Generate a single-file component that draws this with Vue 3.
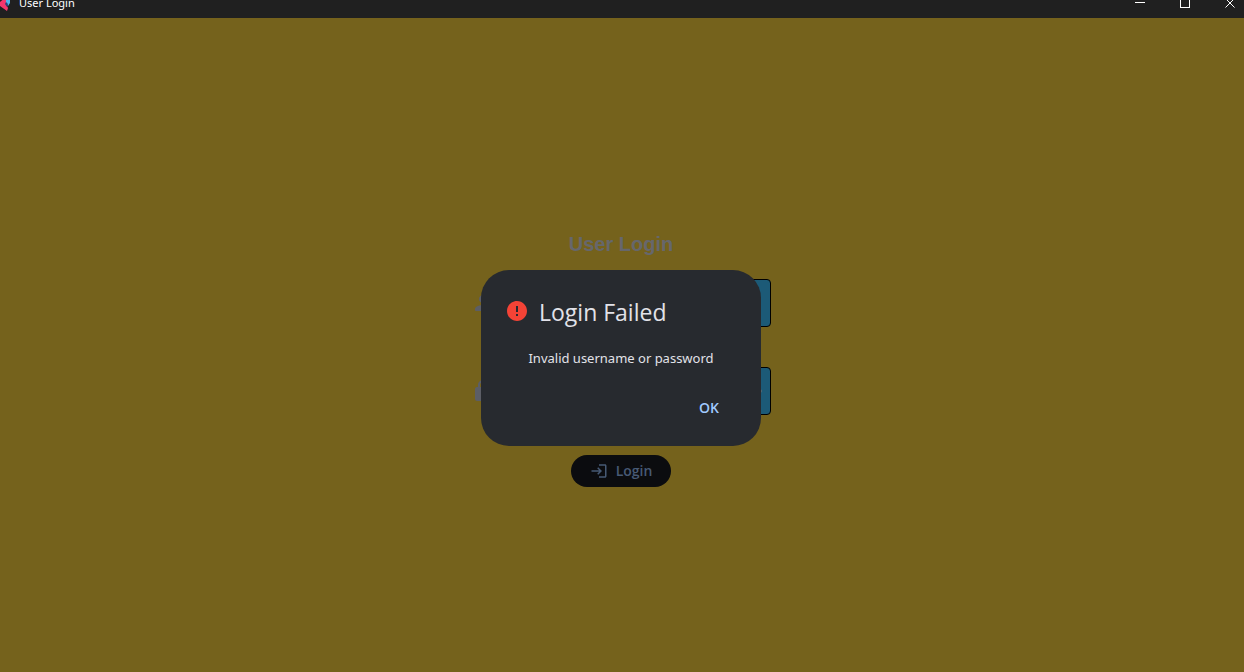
<script setup>
import { ref } from 'vue'

const username = ref('')
const password = ref('')
</script>

<template>
  <div class="window">
    <header class="titlebar">
      <div class="titlebar-row">
        <svg class="app-icon" width="12" height="18" viewBox="0 0 12 18" aria-hidden="true">
          <path d="M6 3 0 8v4l7 5 1-3-2-4 1-5z" fill="#f4376d" />
          <path d="M6 4h4v5l-2 3-2-3z" fill="#4fb3e8" />
          <path d="M6 8l2 2-1 3-2-3z" fill="#2b3f7a" />
        </svg>
        <span class="app-name">User Login</span>
        <div class="controls">
          <button type="button" aria-label="Minimize">
            <svg width="10" height="10" viewBox="0 0 10 10"><path d="M0 4.5h10" /></svg>
          </button>
          <button type="button" aria-label="Maximize">
            <svg width="10" height="10" viewBox="0 0 10 10"><rect x=".5" y=".5" width="9" height="9" /></svg>
          </button>
          <button type="button" aria-label="Close">
            <svg width="10" height="10" viewBox="0 0 10 10"><path d="m.5.5 9 9m0-9-9 9" /></svg>
          </button>
        </div>
      </div>
    </header>

    <main class="page">
      <form class="login" @submit.prevent>
        <h1>User Login</h1>
        <div class="row">
          <svg class="lead" width="24" height="24" viewBox="0 0 24 24" aria-hidden="true">
            <path d="M12 12c2.210 0 4-1.790 4-4s-1.790-4-4-4-4 1.790-4 4 1.790 4 4 4zm0 2c-2.670 0-8 1.340-8 4v1c0 .55.45 1 1 1h14c.55 0 1-.45 1-1v-1c0-2.660-5.330-4-8-4z" />
          </svg>
          <div class="field">
            <input v-model="username" type="text" aria-label="Username" />
          </div>
        </div>
        <div class="row">
          <svg class="lead" width="24" height="24" viewBox="0 0 24 24" aria-hidden="true">
            <path d="M18 8h-1V6c0-2.760-2.240-5-5-5S7 3.240 7 6v2H6c-1.100 0-2 .9-2 2v10c0 1.100.9 2 2 2h12c1.100 0 2-.9 2-2V10c0-1.100-.9-2-2-2zM9 8V6c0-1.660 1.340-3 3-3s3 1.340 3 3v2H9z" />
          </svg>
          <div class="field">
            <input v-model="password" type="password" aria-label="Password" />
            <button type="button" class="reveal" aria-label="Show password">
              <svg width="24" height="24" viewBox="0 0 24 24">
                <path d="M12 4.500C7 4.500 2.730 7.610 1 12c1.730 4.390 6 7.500 11 7.500s9.270-3.110 11-7.500c-1.730-4.390-6-7.500-11-7.500zM12 17c-2.760 0-5-2.240-5-5s2.240-5 5-5 5 2.240 5 5-2.240 5-5 5zm0-8c-1.660 0-3 1.340-3 3s1.340 3 3 3 3-1.340 3-3-1.340-3-3-3z" />
              </svg>
            </button>
          </div>
        </div>
        <button type="submit" class="submit">
          <svg width="18" height="18" viewBox="0 0 24 24" aria-hidden="true">
            <path d="M11 7 9.600 8.400l2.600 2.600H2v2h10.200l-2.600 2.600L11 17l5-5-5-5zm9 12h-8v2h8c1.100 0 2-.9 2-2V5c0-1.100-.9-2-2-2h-8v2h8v14z" />
          </svg>
          <span>Login</span>
        </button>
      </form>

      <div class="overlay">
        <section class="dialog" role="alertdialog" aria-modal="true" aria-labelledby="dlg-title" aria-describedby="dlg-text">
          <div class="dialog-head">
            <svg width="24" height="24" viewBox="0 0 24 24" aria-hidden="true">
              <path d="M12 2C6.480 2 2 6.480 2 12s4.480 10 10 10 10-4.480 10-10S17.520 2 12 2zm1 15h-2v-2h2v2zm0-4h-2V7h2v6z" />
            </svg>
            <h2 id="dlg-title">Login Failed</h2>
          </div>
          <p id="dlg-text">Invalid username or password</p>
          <div class="actions">
            <button type="button">OK</button>
          </div>
        </section>
      </div>
    </main>
  </div>
</template>

<style>
body {
  margin: 0;
  background: #75621c;
}
</style>

<style scoped>
.window {
  display: flex;
  flex-direction: column;
  min-height: 100vh;
  font-family: "Open Sans", "Noto Sans", sans-serif;
}

button {
  border: 0;
  padding: 0;
  background: transparent;
  font: inherit;
}

svg {
  display: block;
  flex: none;
}

.titlebar {
  height: 18px;
  overflow: hidden;
  background: #202020;
}

.titlebar-row {
  display: flex;
  align-items: center;
  height: 30px;
  margin-top: -12px;
}

.app-name {
  margin-left: 7px;
  color: #fff;
  font-family: "Noto Sans", sans-serif;
  font-size: 11px;
  line-height: 16px;
}

.controls {
  display: flex;
  margin-left: auto;
}

.controls button {
  display: flex;
  align-items: center;
  justify-content: center;
  box-sizing: border-box;
  width: 45px;
  height: 30px;
}

.controls button:last-child {
  width: 37px;
  padding-left: 9px;
}

.controls svg {
  fill: none;
  stroke: #fff;
}

.page {
  position: relative;
  display: flex;
  flex: 1;
  align-items: center;
  justify-content: center;
  box-sizing: border-box;
  padding-top: 26px;
  padding-right: 2px;
  background: #75621c;
}

.login {
  display: flex;
  flex-direction: column;
  align-items: center;
  width: 300px;
}

h1 {
  margin: 0 0 20px;
  color: #66676c;
  font: bold 20px/30px "Liberation Sans", Arial, sans-serif;
}

.row {
  display: flex;
  align-items: center;
  gap: 16px;
  width: 100%;
  margin-bottom: 40px;
}

.lead {
  fill: #5c5e66;
}

.field {
  display: flex;
  flex: 1;
  align-items: center;
  box-sizing: border-box;
  height: 48px;
  padding-right: 7px;
  border: 1px solid #000;
  border-radius: 4px;
  background: #1c5a77;
}

.field input {
  flex: 1;
  min-width: 0;
  border: 0;
  padding: 0 12px;
  outline: 0;
  background: transparent;
  color: #66676c;
  font: inherit;
}

.reveal {
  fill: #5c6a72;
}

.submit {
  display: flex;
  align-items: center;
  gap: 8px;
  height: 32px;
  padding: 0 19px;
  border-radius: 16px;
  background: #0b0c0f;
  color: #475a75;
  fill: #475a75;
  font-size: 14px;
  font-weight: 600;
  line-height: 20px;
}

.overlay {
  position: absolute;
  inset: 26px 2px 0 0;
  display: flex;
  align-items: center;
  justify-content: center;
}

.dialog {
  box-sizing: border-box;
  width: 280px;
  padding: 24px 24px 22px;
  border-radius: 28px;
  background: #272a2f;
}

.dialog-head {
  display: flex;
  align-items: flex-start;
  gap: 10px;
}

.dialog-head svg {
  margin-top: 5px;
  fill: #f44336;
}

h2 {
  margin: 0;
  color: #e2e2e9;
  font-size: 23px;
  font-weight: 400;
  line-height: 36px;
}

p {
  margin: 18px 0 0;
  color: #e2e2e9;
  font-family: "Noto Sans", sans-serif;
  font-size: 13px;
  line-height: 20px;
  text-align: center;
}

.actions {
  display: flex;
  justify-content: flex-end;
  margin-top: 24px;
}

.actions button {
  height: 32px;
  padding: 0 18px;
  color: #a0c9ff;
  font-size: 14px;
  font-weight: 600;
  line-height: 20px;
}
</style>
